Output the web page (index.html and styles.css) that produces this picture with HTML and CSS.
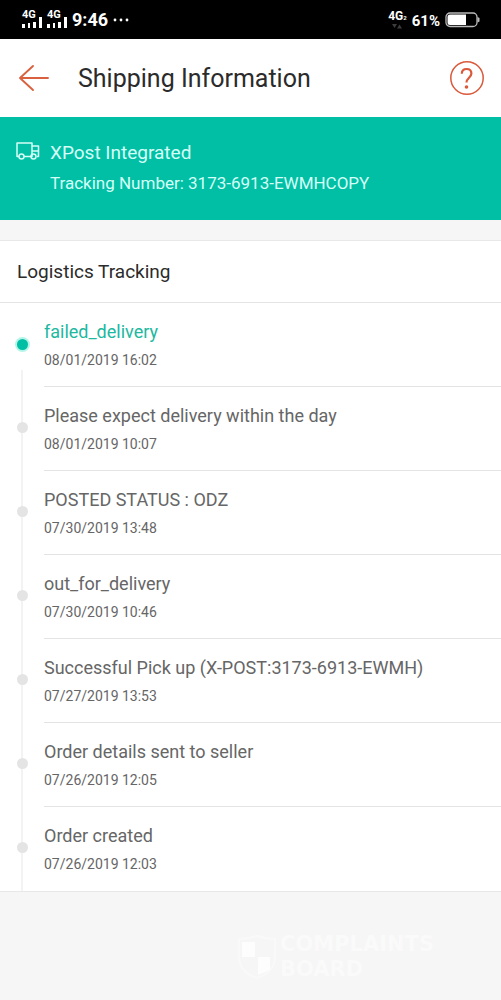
FILE: index.html
```html
<!DOCTYPE html>
<html lang="en">
<head>
<meta charset="utf-8">
<meta name="viewport" content="width=device-width, initial-scale=1">
<title>Shipping Information</title>
<link rel="stylesheet" href="styles.css">
</head>
<body>
<div class="status">
  <div class="status-side">
    <span class="signal"><span class="net">4G</span><svg width="20" height="12" viewBox="0 0 20 12" fill="#fff"><path d="M0 8h3v4H0zM6 7h2v5H6zM11 6h3v6h-3zM17 1h3v11h-3z"/></svg></span>
    <span class="signal"><span class="net">4G</span><svg width="20" height="12" viewBox="0 0 20 12" fill="#fff"><path d="M0 8h3v4H0zM6 7h2v5H6zM11 6h3v6h-3zM17 1h3v11h-3z"/></svg></span>
    <span class="clock">9:46</span>
    <svg width="16" height="4" viewBox="0 0 16 4" fill="#fff"><circle cx="2" cy="2" r="1.400"/><circle cx="8" cy="2" r="1.400"/><circle cx="14" cy="2" r="1.400"/></svg>
  </div>
  <div class="status-side status-right">
    <span class="data"><span class="data-label">4G<small>2</small></span><svg width="10" height="5" viewBox="0 0 10 5" fill="#3c3c3c"><path d="M0 0h5L2.500 4zM5 4.500h5L7.500 .500z"/></svg></span>
    <span class="percent">61%</span>
    <svg width="36" height="16" viewBox="0 0 36 16"><rect x="1" y="1" width="31" height="13.500" rx="4" fill="none" stroke="#bbb" stroke-width="1.300"/><path d="M5 2.500h16v10.500H5a2.500 2.500 0 0 1-2.500-2.500V5A2.500 2.500 0 0 1 5 2.500z" fill="#fff"/><path d="M32.500 5l2 1v3.500l-2 1z" fill="#bbb"/></svg>
  </div>
</div>
<header class="bar">
  <button class="icon-button" aria-label="Back"><svg width="32" height="28" viewBox="0 0 32 28" fill="none" stroke="#d9613f" stroke-width="1.900" stroke-linecap="round" stroke-linejoin="round"><path d="M15 2L2 14l13 12M2 14h28"/></svg></button>
  <h1>Shipping Information</h1>
  <button class="icon-button" aria-label="Help"><svg width="36" height="36" viewBox="0 0 36 36" fill="none" stroke="#d9593a"><circle cx="18" cy="18" r="16.200" stroke-width="1.500"/><path d="M12.800 13.800c0-3 2-4.800 4.800-4.800s4.800 1.700 4.800 4.500c0 4-4.900 4.500-4.900 8.900" stroke-width="2.200"/><circle cx="17.500" cy="27" r="1.800" fill="#d9593a" stroke="none"/></svg></button>
</header>
<main>
  <section class="carrier">
    <svg class="truck" width="24" height="18" viewBox="0 0 24 18" fill="none" stroke="#d5fff7" stroke-width="1.500" stroke-linejoin="round"><path d="M3 14.500H1V1h15v13.500H8M16 4h6.500v10.500H21M16 9h6.500"/><circle cx="5.500" cy="14.500" r="2.500"/><circle cx="17.500" cy="14.500" r="2.500"/></svg>
    <div>
      <h2 class="carrier-name">XPost Integrated</h2>
      <p class="tracking">Tracking Number: 3173-6913-EWMHCOPY</p>
    </div>
  </section>
  <section class="card">
    <h2 class="card-title">Logistics Tracking</h2>
    <ol class="events">
      <li class="event current"><span class="rail"></span><div class="detail"><h3>failed_delivery</h3><time>08/01/2019 16:02</time></div></li>
      <li class="event"><span class="rail"></span><div class="detail"><h3>Please expect delivery within the day</h3><time>08/01/2019 10:07</time></div></li>
      <li class="event"><span class="rail"></span><div class="detail"><h3>POSTED STATUS : ODZ</h3><time>07/30/2019 13:48</time></div></li>
      <li class="event"><span class="rail"></span><div class="detail"><h3>out_for_delivery</h3><time>07/30/2019 10:46</time></div></li>
      <li class="event"><span class="rail"></span><div class="detail"><h3>Successful Pick up (X-POST:3173-6913-EWMH)</h3><time>07/27/2019 13:53</time></div></li>
      <li class="event"><span class="rail"></span><div class="detail"><h3>Order details sent to seller</h3><time>07/26/2019 12:05</time></div></li>
      <li class="event"><span class="rail"></span><div class="detail"><h3>Order created</h3><time>07/26/2019 12:03</time></div></li>
    </ol>
  </section>
</main>
<footer class="watermark">
  <svg width="38" height="44" viewBox="0 0 38 44"><path d="M1 4Q10 4 19 1q9 3 18 3v18q0 15-18 21Q1 37 1 22z" fill="none" stroke="#f9f9f9" stroke-width="2"/><path d="M4 7h13v15H4zM20 22h12v13l-12 5z" fill="#fdfdfd"/></svg>
  <div><p>COMPLAINTS</p><p>BOARD</p></div>
</footer>
</body>
</html>
```
FILE: styles.css
```css
* { box-sizing: border-box; }
body {
  margin: 0;
  min-height: 100vh;
  display: flex;
  flex-direction: column;
  background: #f6f6f6;
  color: #2b2b2b;
  font-family: Roboto, "Liberation Sans", sans-serif;
}
h1, h2, h3, p, ol { margin: 0; padding: 0; font-weight: 400; }
svg { display: block; }

.status {
  height: 39px;
  padding: 0 20px 0 22px;
  display: flex;
  align-items: center;
  justify-content: space-between;
  background: #000;
  color: #fff;
}
.status-side { display: flex; align-items: center; gap: 5px; }
.signal { display: grid; }
.signal > * { grid-area: 1 / 1; }
.signal svg { align-self: end; }
.net { height: 17px; font-size: 11px; line-height: 8px; font-weight: 700; }
.clock { font-size: 18px; line-height: 24px; font-weight: 700; }
.status-right { gap: 5px; }
.data { display: flex; flex-direction: column; align-items: center; }
.data-label { font-size: 12px; line-height: 12px; font-weight: 700; }
.data-label small { font-size: 6px; }
.percent { padding-top: 2px; font-size: 15px; line-height: 24px; font-weight: 700; }

.bar {
  height: 78px;
  padding: 0 16px 0 18px;
  display: flex;
  align-items: center;
  background: #fff;
}
.bar h1 { flex: 1; padding: 2px 0 0 28px; font-size: 25px; line-height: 32px; }
.icon-button { padding: 0; border: 0; background: none; }

.carrier {
  display: flex;
  gap: 10px;
  padding: 24px 16px;
  background: #00bfa5;
  color: #d5fff7;
}
.truck { margin-top: 1px; }
.carrier-name { font-size: 19px; line-height: 24px; }
.tracking { padding: 6px 0 1px; font-size: 17px; line-height: 24px; }

.card {
  margin-top: 20px;
  background: #fff;
  border-top: 1px solid #e8e8e8;
  border-bottom: 1px solid #e8e8e8;
}
.card-title {
  padding: 18px 17px;
  border-bottom: 1px solid #e4e4e4;
  font-size: 19px;
  line-height: 25px;
}
.events { list-style: none; }
.event { display: flex; color: #666; }
.rail {
  width: 44px;
  padding-top: 36px;
  display: grid;
  place-items: start center;
  background: linear-gradient(#f3f3f3, #f3f3f3) 21px 0 / 2px 100% no-repeat;
}
.rail::before {
  content: "";
  width: 11px;
  height: 11px;
  border-radius: 50%;
  background: #e4e4e4;
}
.event + .event .rail { padding-top: 35px; }
.current .rail { background-image: linear-gradient(transparent 80%, #f3f3f3 80%); }
.current .rail::before { background: #00bfa5; box-shadow: 0 0 0 2px #b5f5e9; }
.detail {
  flex: 1;
  padding: 17px 0 16px;
  border-bottom: 1px solid #e4e4e4;
}
.event:last-child .detail { border-color: transparent; }
.detail h3 { padding-bottom: 6px; font-size: 18px; line-height: 24px; }
.detail time { display: block; font-size: 14px; line-height: 20px; }
.current h3 { color: #20b89f; }

.watermark {
  margin-top: auto;
  padding: 0 40px 18px 238px;
  display: flex;
  align-items: center;
  gap: 4px;
  color: #fafafa;
  font-family: "DejaVu Sans", sans-serif;
  font-size: 21px;
  line-height: 25px;
}
.watermark p { font-weight: 700; }
```
